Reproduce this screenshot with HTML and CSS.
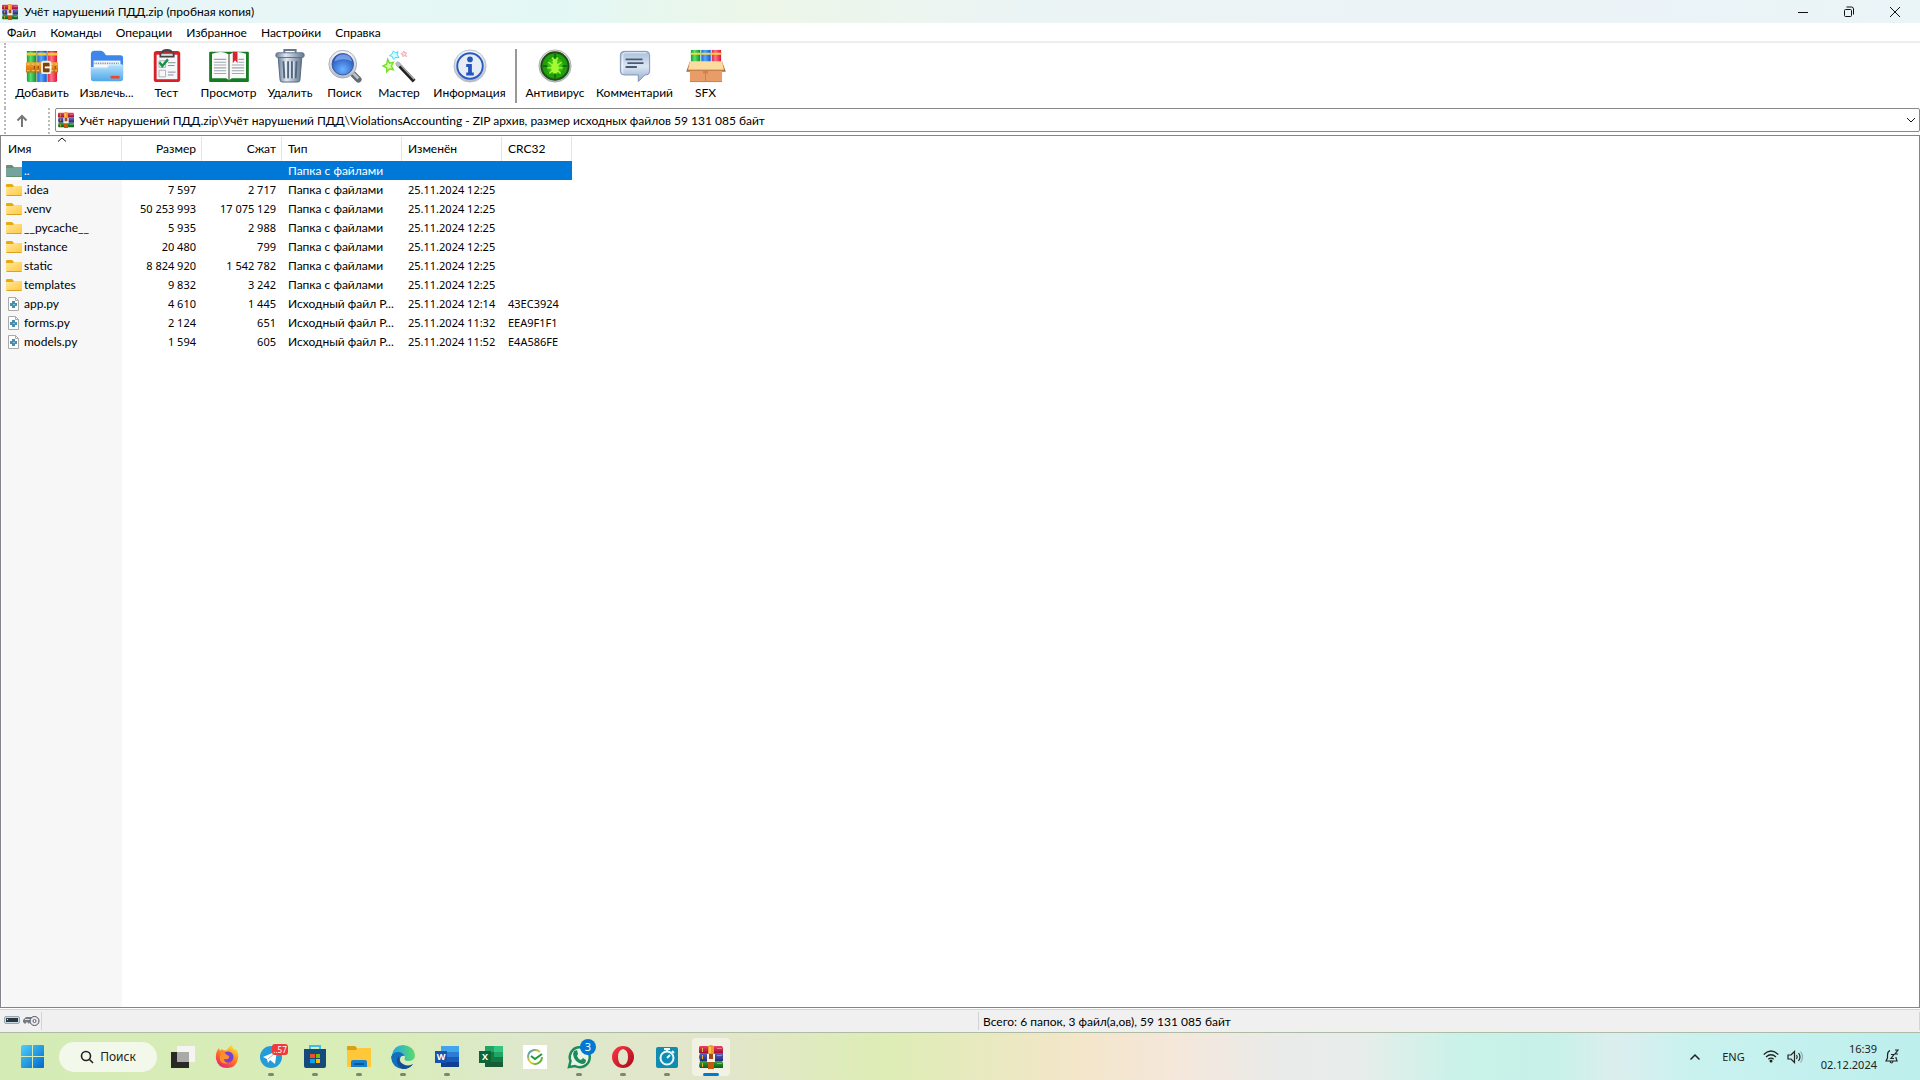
FILE: index.html
```html
<!DOCTYPE html>
<html lang="ru">
<head>
<meta charset="utf-8">
<title>Учёт нарушений ПДД.zip (пробная копия)</title>
<link rel="stylesheet" href="styles.css">
</head>
<body>
<svg class="defs" aria-hidden="true">
  <defs>
    <linearGradient id="g-red" x2="0" y2="1"><stop offset="0" stop-color="#f0416a"/><stop offset="1" stop-color="#9e1030"/></linearGradient>
    <linearGradient id="g-blue" x2="0" y2="1"><stop offset="0" stop-color="#5a62c8"/><stop offset="1" stop-color="#252a78"/></linearGradient>
    <linearGradient id="g-green" x2="0" y2="1"><stop offset="0" stop-color="#38a838"/><stop offset="1" stop-color="#0c5a1c"/></linearGradient>
    <linearGradient id="g-bgreen"><stop offset="0" stop-color="#15a030"/><stop offset=".4" stop-color="#58e070"/><stop offset="1" stop-color="#128a2c"/></linearGradient>
    <linearGradient id="g-bblue"><stop offset="0" stop-color="#1768d8"/><stop offset=".4" stop-color="#58a8ff"/><stop offset="1" stop-color="#1258c8"/></linearGradient>
    <linearGradient id="g-bred"><stop offset="0" stop-color="#e02848"/><stop offset=".4" stop-color="#ff7088"/><stop offset="1" stop-color="#d81838"/></linearGradient>
    <linearGradient id="g-belt" x2="0" y2="1"><stop offset="0" stop-color="#f8a830"/><stop offset="1" stop-color="#c86808"/></linearGradient>
    <linearGradient id="g-folder" x2="1" y2="1"><stop offset="0" stop-color="#ffe8a0"/><stop offset="1" stop-color="#ffc93c"/></linearGradient>
    <linearGradient id="g-bfold" x2="0" y2="1"><stop offset="0" stop-color="#b8e4fc"/><stop offset="1" stop-color="#4fa8ea"/></linearGradient>
    <linearGradient id="g-steel"><stop offset="0" stop-color="#6c7f98"/><stop offset=".35" stop-color="#dfe8f1"/><stop offset="1" stop-color="#62768f"/></linearGradient>
    <linearGradient id="g-silver" x2="0" y2="1"><stop offset="0" stop-color="#f6f8fa"/><stop offset="1" stop-color="#b4bcc6"/></linearGradient>
    <radialGradient id="g-lens" cx=".5" cy=".75" r=".75"><stop offset="0" stop-color="#6ab4ff"/><stop offset="1" stop-color="#1c46b4"/></radialGradient>
    <radialGradient id="g-virus"><stop offset="0" stop-color="#5fe81c"/><stop offset="1" stop-color="#128f08"/></radialGradient>
    <linearGradient id="g-bubble" x2="0" y2="1"><stop offset="0" stop-color="#a8bedb"/><stop offset=".5" stop-color="#dbe6f3"/><stop offset="1" stop-color="#91abcc"/></linearGradient>
    <linearGradient id="g-win" x2="1" y2="1"><stop offset="0" stop-color="#4fd0fa"/><stop offset="1" stop-color="#0068cc"/></linearGradient>
    <linearGradient id="g-fox" x1=".8" x2=".2" y2="1"><stop offset="0" stop-color="#ffe53c"/><stop offset=".5" stop-color="#ff7a20"/><stop offset="1" stop-color="#e8187c"/></linearGradient>
    <linearGradient id="g-edge" x2="1" y2="0"><stop offset="0" stop-color="#22a4e8"/><stop offset="1" stop-color="#5bdc68"/></linearGradient>
    <linearGradient id="g-opera" x2="1" y2="1"><stop offset="0" stop-color="#ff3848"/><stop offset="1" stop-color="#a80818"/></linearGradient>
    <linearGradient id="g-sber" x2="1" y2="1"><stop offset="0" stop-color="#2a90e8"/><stop offset=".5" stop-color="#f0d018"/><stop offset="1" stop-color="#18a038"/></linearGradient>
  </defs>
  <symbol id="winrar" viewBox="0 0 24 24">
    <path fill="url(#g-red)" d="M1 1h22l1 2v5H0V2z"/><path fill="url(#g-blue)" d="M1 8h23v8H1L0 12z"/><path fill="url(#g-green)" d="M1 16h22l1 2v5H1l-1-2z"/>
    <path fill="#e0b030" d="M3 3h1v4H3zM3 10h1v4H3zM3 18h1v4H3z"/><path fill="#fff" opacity=".35" d="M18 3h5v1h-5zM18 10h5v1h-5zM18 18h5v1h-5z"/>
    <path fill="#c85810" d="M9 16h6v8H9z"/><path fill="#f09830" d="M9 1l3-1 3 1v8H9z"/><path fill="#ffc850" d="M10 2h2v6h-2z"/>
    <path fill="#a04c10" d="M10 9h4v7h-4z"/><path fill="#f8f2ea" d="M8 9h2v5h4V9h2v8H8z"/>
  </symbol>
  <symbol id="folder" viewBox="0 0 16 14">
    <path fill="#eda90c" d="M0 2a1 1 0 0 1 1-1h5l2 2h7a1 1 0 0 1 1 1v9H0z"/><path fill="url(#g-folder)" d="M0 4h7l1-1h8v9a1 1 0 0 1-1 1H1a1 1 0 0 1-1-1z"/><path fill="#dda026" d="M1 12h14v1H1z"/>
  </symbol>
  <symbol id="folder-up" viewBox="0 0 16 14">
    <path fill="#68906f" d="M0 2a1 1 0 0 1 1-1h5l2 2h7a1 1 0 0 1 1 1v9H0z"/><path fill="#75a49f" d="M0 4h7l1-1h8v9a1 1 0 0 1-1 1H1a1 1 0 0 1-1-1z"/><path fill="#62906e" d="M1 12h14v1H1z"/>
  </symbol>
  <symbol id="py" viewBox="0 0 16 14">
    <path fill="#fff" stroke="#aaa" d="M2.500.500h7l3 3v10h-10z"/><path fill="none" stroke="#aaa" d="M9.500.500v3h3"/>
    <path fill="#4a8fae" d="M6 4h3v2h2v3H9v2H6V9H4V6h2z"/><path fill="#8fc2d6" d="M7 7h2v1H7z"/>
  </symbol>
</svg>

<header class="titlebar">
  <svg class="app-icon"><use href="#winrar"/></svg>
  <h1 class="title">Учёт нарушений ПДД.zip (пробная копия)</h1>
  <div class="window-buttons">
    <button aria-label="Свернуть"><svg width="12" height="12"><path d="M1 6.500h10"/></svg></button>
    <button aria-label="Восстановить"><svg width="12" height="12"><path d="M3.500 1h5q2 0 2 2v5.500"/><rect x="1.500" y="3.500" width="7" height="7" rx="1"/></svg></button>
    <button aria-label="Закрыть"><svg width="12" height="12"><path d="M1 1l10 10M11 1L1 11"/></svg></button>
  </div>
</header>

<nav class="menu">
  <button>Файл</button><button>Команды</button><button>Операции</button><button>Избранное</button><button>Настройки</button><button>Справка</button>
</nav>

<div class="toolbar">
  <button class="tool"><svg viewBox="0 0 36 36">
    <path fill="url(#g-bgreen)" d="M2 2h10v33H3l-1-1z"/><path fill="url(#g-bblue)" d="M13 2h10v33H13z"/><path fill="url(#g-bred)" d="M24 2h10v32l-1 1h-9z"/>
    <path fill="#f6c82c" d="M2 4h10v3H2zM13 4h10v3H13zM24 4h10v3H24z"/><path fill="#222" opacity=".3" d="M2 2h32v1H2zM12 2h1v33h-1zM23 2h1v33h-1z"/>
    <rect y="14" x="1" width="34" height="11" rx="1" fill="url(#g-belt)"/><path fill="none" stroke="#ffd070" d="M2 16h32M2 23h32" stroke-dasharray="3 2"/>
    <path fill="none" stroke="#843c08" d="M14 18v3M10 18v3M32 18v3"/><rect x="18" y="13.500" width="9" height="12" rx="2" fill="#7c400c" stroke="#f8ece0" stroke-width="2"/><path stroke="#fff" stroke-width="2" d="M21 19.500h7"/></svg>Добавить</button>
  <button class="tool"><svg viewBox="0 0 38 36"><path fill="#3f86ea" d="M1 5q0-4 4-4h7q3 0 5 4l1 1h16q3 0 3 3v20H1z"/><path fill="#f7fafc" d="M4 12h30v8H4z"/><path stroke="#7b8794" stroke-width="2" stroke-dasharray="1 1" d="M5 15h28"/><path fill="url(#g-bfold)" d="M1 19h18l3-3h13q2 0 2 2v14q0 3-3 3H4q-3 0-3-3z"/><path fill="none" stroke="#d9f2ff" d="M2 20h17l3-3h13"/><path fill="#f04824" d="M23 29h10v3H23z"/></svg>Извлечь...</button>
  <button class="tool"><svg viewBox="0 0 30 36"><rect x="1" y="2" width="28" height="33" rx="3" fill="#d82028"/><path fill="#f5f6f8" d="M4 6h22v26H4z"/><path fill="none" stroke="#444" stroke-width="2" d="M8 5h14v3H8zM10 4q0-3 5-3t5 3"/><path fill="#d7dce3" d="M9 5h12v2H9z"/><path fill="none" stroke="#aab0b8" d="M6.500 12.500h7v7h-7zM6.500 22.500h7v7h-7z"/><path stroke="#858c95" d="M16 14.500h8M16 17.500h7M16 24.500h8M16 27.500h6"/><path fill="none" stroke="#159544" stroke-width="2.500" d="M7 14l3 4 6-7"/></svg>Тест</button>
  <button class="tool"><svg class="book" viewBox="0 0 44 36"><rect x="1" y="3" width="42" height="32" rx="1" fill="#167c22"/><path fill="#fafafa" d="M4 5q12-4 18 1 6-5 18-1v26H25l-3 2-3-2H4z"/><path stroke="#a0a6ae" stroke-width="1.200" d="M6 11h13M6 14h13M6 17h13M6 20h13M6 23h13M6 26h13M25 17h13M25 20h13M25 23h13M25 26h13M32 11h6M32 14h6"/><path stroke="#6b7c6b" stroke-width="1.500" d="M22 6v27"/><path fill="#d82430" d="M26 3h5v12l-2.500-3-2.500 3z"/></svg>Просмотр</button>
  <button class="tool"><svg viewBox="0 0 32 36"><path fill="none" stroke="#66788f" stroke-width="2" d="M10 4V1h12v3"/><path fill="url(#g-steel)" stroke="#536779" d="M3.500 9h25l-2 24q0 2-3 2h-15q-3 0-3-2z"/><rect x="1" y="4" width="30" height="5" rx="2" fill="url(#g-steel)" stroke="#5f7085"/><path stroke="#52667e" stroke-width="2" d="M9 13l1 18M14 13v18M18 13v18M23 13l-1 18"/><path stroke="#edf4fb" d="M11 13l1 18M16 13v18M20 13v18"/></svg>Удалить</button>
  <button class="tool"><svg viewBox="0 0 38 36"><path stroke="#646b74" stroke-width="7" stroke-linecap="round" d="M28 27l6 6"/><path stroke="#bcc2c9" stroke-width="3" d="M27 25l7 7"/><circle cx="16.500" cy="16" r="15.500" fill="url(#g-silver)" stroke="#a4abb4"/><circle cx="16.500" cy="16" r="12" fill="url(#g-lens)" stroke="#3a549c"/><path fill="#a4c8fa" opacity=".6" d="M7 13q2-8 10-8t10 8q-10-5-20 0"/></svg>Поиск</button>
  <button class="tool"><svg viewBox="0 0 36 36"><path stroke="#222" stroke-width="4" d="M16 15l18 19"/><path stroke="#a9adb1" stroke-width="1.500" d="M17 14l17 18"/><path stroke="#b8bcc2" stroke-width="4" d="M15 14l4 4"/><path fill="#d8ffa0" stroke="#70e020" stroke-width="1.500" d="M6 11l2 4 4-1-2 4 2 4-4-1-3 3v-4l-4-2 4-2z"/><path fill="#d8fbff" stroke="#42d4f4" d="M12 2l2 2 3-1-1 3 2 3h-4l-2 2-1-3-3-1 3-2z"/><path fill="#ffe0e0" stroke="#f49498" stroke-width=".800" d="M23 2l1 2h2l-1 2 1 2-2-1-2 1v-2l-2-1 2-1z"/></svg>Мастер</button>
  <button class="tool"><svg viewBox="0 0 36 36"><circle cx="18" cy="18" r="17" fill="url(#g-silver)" stroke="#b5bcc8"/><circle cx="18" cy="18" r="13.500" fill="#e8edf5" stroke="#2a5bc4" stroke-width="2"/><circle cx="18" cy="11" r="3" fill="#2457bd"/><path fill="#2457bd" d="M14 16h6v9h2v3h-8v-3h2v-6h-2z"/></svg>Информация</button>
  <span class="tool-separator"></span>
  <button class="tool"><svg viewBox="0 0 36 36"><circle cx="18" cy="18" r="17" fill="url(#g-silver)" stroke="#a5aaa5"/><circle cx="18" cy="18" r="14.500" fill="url(#g-virus)" stroke="#224a18" stroke-width="2"/><circle cx="18" cy="18" r="10" fill="none" stroke="#159010"/><path stroke="#145c10" stroke-width="1.500" d="M18 5v5M18 26v5M5 18h5M26 18h5"/><ellipse cx="18" cy="20" rx="4" ry="6" fill="#a6fa35"/><circle cx="18" cy="13" r="2.500" fill="#a6fa35"/><path stroke="#a6fa35" stroke-width="1.500" fill="none" d="M11 14l4 3M10 20h16M12 26l3-3M25 14l-4 3M24 26l-3-3M15 9l2 3M21 9l-2 3"/></svg>Антивирус</button>
  <button class="tool"><svg viewBox="0 0 36 36"><path fill="url(#g-bubble)" stroke="#7b93b4" d="M6.500 2.500h23q4 0 4 4v17q0 4-4 4h-1l-7 7v-7h-15q-4 0-4-4v-17q0-4 4-4z"/><path fill="none" stroke="#edf4fc" d="M5 26V7q0-3 3-3h22"/><path stroke="#4a5a72" stroke-width="2" d="M8 11h18M10 15h17M8 19h12"/></svg>Комментарий</button>
  <button class="tool"><svg class="box" viewBox="0 0 42 36"><path fill="url(#g-bgreen)" d="M5 1h10v14H5z"/><path fill="url(#g-bblue)" d="M16 1h10v14H16z"/><path fill="url(#g-bred)" d="M27 1h10v14H27z"/><path fill="#f6d83c" d="M5 4h10v2H5zM16 4h10v2H16zM27 4h10v2H27z"/><path fill="#b36c3b" d="M4 13L0 24h6zM38 13l4 11h-6z"/><path fill="#e89c68" d="M4 20h34v14H4z"/><path fill="#fbdc9e" d="M4 13h34l2 9H2z"/><path fill="#c98158" d="M18 23h5v3h-5zM20 26h1v8h-1z"/><path stroke="#bb7646" d="M4 22.500h34M4 34.500h34"/></svg>SFX</button>
</div>

<div class="address-row">
  <button class="up" aria-label="Вверх"><svg width="12" height="14"><path d="M6 13V2M1.500 6.500L6 2l4.500 4.500"/></svg></button>
  <div class="address">
    <svg class="app-icon"><use href="#winrar"/></svg>
    <input aria-label="Путь" value="Учёт нарушений ПДД.zip\Учёт нарушений ПДД\ViolationsAccounting - ZIP архив, размер исходных файлов 59 131 085 байт">
    <button aria-label="Раскрыть список"><svg width="10" height="6"><path d="M1 1l4 4 4-4"/></svg></button>
  </div>
</div>

<main class="list">
  <table class="files">
    <colgroup><col class="c-name"><col class="c-num"><col class="c-num"><col class="c-type"><col class="c-date"><col class="c-crc"></colgroup>
    <thead><tr><th class="sorted">Имя<svg width="10" height="5"><path d="M1 4.500L5 1l4 3.500"/></svg></th><th class="num">Размер</th><th class="num">Сжат</th><th>Тип</th><th>Изменён</th><th>CRC32</th></tr></thead>
    <tbody>
      <tr class="selected"><td><span class="name"><svg><use href="#folder-up"/></svg><span>..</span></span></td><td></td><td></td><td>Папка с файлами</td><td></td><td></td></tr>
      <tr><td><span class="name"><svg><use href="#folder"/></svg><span>.idea</span></span></td><td class="num">7 597</td><td class="num">2 717</td><td>Папка с файлами</td><td class="date">25.11.2024 12:25</td><td></td></tr>
      <tr><td><span class="name"><svg><use href="#folder"/></svg><span>.venv</span></span></td><td class="num">50 253 993</td><td class="num">17 075 129</td><td>Папка с файлами</td><td class="date">25.11.2024 12:25</td><td></td></tr>
      <tr><td><span class="name"><svg><use href="#folder"/></svg><span>__pycache__</span></span></td><td class="num">5 935</td><td class="num">2 988</td><td>Папка с файлами</td><td class="date">25.11.2024 12:25</td><td></td></tr>
      <tr><td><span class="name"><svg><use href="#folder"/></svg><span>instance</span></span></td><td class="num">20 480</td><td class="num">799</td><td>Папка с файлами</td><td class="date">25.11.2024 12:25</td><td></td></tr>
      <tr><td><span class="name"><svg><use href="#folder"/></svg><span>static</span></span></td><td class="num">8 824 920</td><td class="num">1 542 782</td><td>Папка с файлами</td><td class="date">25.11.2024 12:25</td><td></td></tr>
      <tr><td><span class="name"><svg><use href="#folder"/></svg><span>templates</span></span></td><td class="num">9 832</td><td class="num">3 242</td><td>Папка с файлами</td><td class="date">25.11.2024 12:25</td><td></td></tr>
      <tr><td><span class="name"><svg><use href="#py"/></svg><span>app.py</span></span></td><td class="num">4 610</td><td class="num">1 445</td><td>Исходный файл P...</td><td class="date">25.11.2024 12:14</td><td class="date">43EC3924</td></tr>
      <tr><td><span class="name"><svg><use href="#py"/></svg><span>forms.py</span></span></td><td class="num">2 124</td><td class="num">651</td><td>Исходный файл P...</td><td class="date">25.11.2024 11:32</td><td class="date">EEA9F1F1</td></tr>
      <tr><td><span class="name"><svg><use href="#py"/></svg><span>models.py</span></span></td><td class="num">1 594</td><td class="num">605</td><td>Исходный файл P...</td><td class="date">25.11.2024 11:52</td><td class="date">E4A586FE</td></tr>
    </tbody>
  </table>
</main>

<footer class="status">
  <div class="status-icons">
    <svg width="16" height="10"><rect x=".500" y="1.500" width="15" height="7" rx="1.500" fill="#c5dbe6" stroke="#8fa9b8"/><path fill="#30363e" d="M2 3h12v4H2z"/><path fill="#e4ebef" d="M3 4h1v1H3z"/></svg>
    <svg width="17" height="12"><path fill="#757b83" d="M0 5l3-3h7v5H7L6 9 4 7 2 9 0 7z"/><path stroke="#dfe3e8" d="M2 4.500h7"/><circle cx="11.500" cy="6" r="4.500" fill="#e8eaee" stroke="#4d525a"/><circle cx="11.500" cy="6" r="1.500" fill="#fff" stroke="#555b63"/></svg>
  </div>
  <div class="status-left"></div>
  <div class="status-right">Всего: 6 папок, 3 файл(а,ов), 59 131 085 байт</div>
</footer>

<div class="taskbar">
  <button class="start" aria-label="Пуск"><svg width="24" height="24"><path fill="url(#g-win)" d="M2 0h9v11H0V2q0-2 2-2zM12 0h10q1 0 1 1v10H12zM0 12h11v11H1q-1 0-1-1zM12 12h11v10q0 1-1 1H12z"/></svg></button>
  <button class="search"><svg width="14" height="14"><circle cx="6" cy="6" r="4.500"/><path d="M9.500 9.500L13 13"/></svg>Поиск</button>
  <div class="apps">
    <button aria-label="Представление задач"><svg viewBox="0 0 24 24"><path fill="#f4f4f2" d="M6 1h18v16H6z"/><path fill="#292927" d="M0 7h18v16H0z"/><path fill="#aaaaa8" d="M6 7h12v10H6z"/></svg></button>
    <button aria-label="Firefox"><svg viewBox="0 0 24 24"><path fill="url(#g-fox)" d="M12 5q2-4 5-5 0 3 3 5l1-1q3 4 2 10-2 9-11 9T1 14Q0 8 4 3l1 3 2-2q1 2 5 1z"/><circle cx="13" cy="12" r="5.500" fill="#7440d8"/><path fill="#ff9028" d="M4 8q5-2 8 2 3 1 2 3-2 2-5 1 0 3 4 4-6 2-8-3-1-4 1-7z"/></svg></button>
    <button class="running" aria-label="Telegram"><svg viewBox="0 0 24 24"><circle cx="12" cy="12" r="11" fill="#259cd5"/><path fill="#fff" d="M4 12l14-6-2 13-5-4-2 3-1-4z"/><path stroke="#97b9cd" d="M9 14l7-6"/></svg><span class="badge red">..57</span></button>
    <button class="running" aria-label="Microsoft Store"><svg viewBox="0 0 24 24"><path fill="none" stroke="#36c1f1" stroke-width="2" d="M7 5V1h10v4"/><path fill="#174a7c" d="M1 4h22v17q0 2-2 2H3q-2 0-2-2z"/><path fill="#f25022" d="M7 9h5v4H7z"/><path fill="#7fba00" d="M13 9h4v4h-4z"/><path fill="#00a4ef" d="M7 14h5v4H7z"/><path fill="#ffb900" d="M13 14h4v4h-4z"/></svg></button>
    <button class="running" aria-label="Проводник"><svg viewBox="0 0 24 24"><path fill="#dc9e12" d="M0 2q0-1 1-1h7l2 2v4H0z"/><path fill="#ffc83b" d="M0 5h9l2-2h13v18q0 1-1 1H1q-1 0-1-1z"/><path fill="#1680ce" d="M4 22v-5q0-2 2-2h12q2 0 2 2v5z"/><path fill="#0a579e" d="M7 18h10v2H7z"/></svg></button>
    <button class="running" aria-label="Microsoft Edge"><svg viewBox="0 0 24 24"><path fill="url(#g-edge)" d="M1 10Q3 0 12 0q11 1 12 10 0 6-7 6-5 0-3-4-1-5-6-4-4 0-7 4z"/><path fill="#1270bd" d="M0 12q2-5 7-5 5 0 7 4-5-1-5 4 0 5 7 6 3 0 6-2-4 5-10 5Q1 23 0 12z"/><path fill="#174d91" d="M8 11q-4 4-1 9 2 3 5 4 7 0 10-5-5 3-10 0-5-3-4-8z"/></svg></button>
    <button class="running" aria-label="Word"><svg viewBox="0 0 24 24"><path fill="#41a5ee" d="M6 1h18v6H6z"/><path fill="#2b7cd3" d="M6 7h18v5H6z"/><path fill="#185abd" d="M6 12h18v5H6z"/><path fill="#103f91" d="M6 17h18v5H6z"/><path fill="#1652ae" d="M0 6h12v12H0z"/><text x="6" y="15" class="office">W</text></svg></button>
    <button aria-label="Excel"><svg viewBox="0 0 24 24"><path fill="#21a366" d="M6 1h9v6H6z"/><path fill="#33c481" d="M15 1h9v6h-9z"/><path fill="#107c41" d="M6 7h9v10H6zM15 12h9v5h-9z"/><path fill="#21a366" d="M15 7h9v5h-9z"/><path fill="#185c37" d="M6 17h18v5H6z"/><path fill="#0c6534" d="M0 6h12v12H0z"/><text x="6" y="15" class="office">X</text></svg></button>
    <button aria-label="Сбер"><svg viewBox="0 0 24 24"><path fill="#fff" d="M0 0h24v24H0z"/><path fill="none" stroke="url(#g-sber)" stroke-width="2" d="M17 7a7 7 0 1 0 2 5"/><path fill="none" stroke="#199a38" stroke-width="2" d="M8 11l4 3 7-5"/></svg></button>
    <button class="running" aria-label="WhatsApp"><svg viewBox="0 0 24 24"><path fill="#e9f4e4" stroke="#1d8b5c" stroke-width="2.500" d="M2 22l1.500-6A10 10 0 1 1 8 21z"/><path fill="#1d8b5c" d="M7 6l3-1 1 4-1 2q1 3 4 4l2-2 3 2q0 4-4 4-8-2-9-10z"/></svg><span class="badge blue">3</span></button>
    <button class="running" aria-label="Opera"><svg viewBox="0 0 24 24"><path fill="url(#g-opera)" fill-rule="evenodd" d="M12 1a11 11 0 1 0 0 22 11 11 0 1 0 0-22zm0 3q5 1 5 8t-5 8q-5-1-5-8t5-8z"/></svg></button>
    <button class="running" aria-label="Таймер"><svg viewBox="0 0 24 24"><rect x="1" y="2" width="22" height="21" rx="2" fill="#118cb1"/><circle cx="12" cy="13" r="6.500" fill="none" stroke="#e9f8fc" stroke-width="2"/><path stroke="#e9f8fc" stroke-width="2" d="M9 4h6M12 4v3M17 6l2 2M12 13l3-3"/></svg></button>
    <button class="running active" aria-label="WinRAR"><svg><use href="#winrar"/></svg></button>
  </div>
  <div class="tray">
    <button class="chevron" aria-label="Скрытые значки"><svg width="12" height="8"><path d="M1.500 6.500L6 2l4.500 4.500" stroke-width="1.500"/></svg></button>
    <button class="lang">ENG</button>
    <button class="net" aria-label="Сеть и звук">
      <svg width="16" height="13"><path d="M.700 4.500Q8-2.500 15.300 4.500M3 7q5-4.500 10 0M5.300 9.300q2.700-2.300 5.400 0"/><circle cx="8" cy="11" r="1.500" fill="#222" stroke="none"/></svg>
      <svg width="16" height="14"><path d="M1 5h3l3.500-3.500v11L4 9H1zM9.500 5q1.500 2 0 4M11.500 3q3 4 0 8"/><path opacity=".3" d="M13.500 1.500q4 5.500 0 11"/></svg>
    </button>
    <button class="clock"><time>16:39</time><time>02.12.2024</time></button>
    <button class="bell" aria-label="Уведомления"><svg width="14" height="15"><path d="M5 1.500Q2.500 2.500 2.500 6v3l-1.500 3h11l-1-3V8M5 12.500q1.500 3 3 0M6 5.500h3l-3 4h3M10 1h3l-3 4h3"/></svg></button>
  </div>
</div>
</body>
</html>
```
FILE: styles.css
```css
* { box-sizing: border-box; }
body {
  margin: 0;
  min-height: 100vh;
  display: flex;
  flex-direction: column;
  background: #fff;
  color: #000;
  font: 12px/19px Lato, "Noto Sans", sans-serif;
}
button, input {
  margin: 0;
  padding: 0;
  border: 0;
  background: none;
  color: inherit;
  font: inherit;
}
svg { display: block; flex: none; }
.defs { position: absolute; width: 0; height: 0; }
.app-icon { width: 16px; height: 16px; }

.titlebar {
  display: flex;
  align-items: center;
  height: 23px;
  padding: 0 2px;
  gap: 6px;
  background: linear-gradient(90deg, #e4f4f7, #e8f6f6 14%, #e3f8f5 29%, #edf6e8 40%, #ebf4f5 54%, #ebf3f7 83%, #eaf5f8);
}
.title { flex: 1; margin: 0; font-size: 12px; font-weight: 400; }
.window-buttons { display: flex; }
.window-buttons button { width: 46px; height: 20px; display: grid; place-items: center; }
.window-buttons svg, .address button svg, .up svg, .sorted svg { fill: none; stroke: #111; }

.menu {
  display: flex;
  gap: 14px;
  height: 20px;
  padding-left: 7px;
  border-bottom: 2px solid #eee;
}

.toolbar {
  display: grid;
  grid-template-columns: 60px 69px 51px 73px 50px 59px 50px 91px 2px 76px 83px 59px;
  height: 65px;
  margin-left: 4px;
  padding: 6px 0 0 6px;
  border-left: 2px dotted #bbb;
}
.tool {
  display: flex;
  flex-direction: column;
  align-items: center;
  white-space: nowrap;
}
.tool svg { width: 34px; height: 34px; }
.tool .book, .tool .box { width: 42px; }
.tool-separator { height: 54px; background: #999; }

.address-row {
  display: flex;
  height: 26px;
  margin-left: 4px;
  border-left: 2px dotted #bbb;
}
.up { width: 44px; padding-left: 10px; border-right: 2px dotted #bbb; }
.up svg { stroke: #777; stroke-width: 2; }
.address {
  flex: 1;
  display: flex;
  align-items: center;
  gap: 5px;
  height: 24px;
  margin-left: 5px;
  padding: 0 3px 0 2px;
  border: 1px solid #888;
  border-radius: 2px;
}
.address input { flex: 1; min-width: 0; outline: 0; }

.list {
  flex: 1;
  border: 1px solid #83838a;
  margin-top: 1px;
  padding-top: 1px;
  background: linear-gradient(90deg, #fff 1px, #f7f7f7 1px, #f7f7f7 121px, #fff 121px);
}
.files { width: 571px; table-layout: fixed; border-collapse: separate; border-spacing: 0; }
.c-name { width: 121px; }
.c-num { width: 80px; }
.c-type { width: 120px; }
.c-date { width: 100px; }
.c-crc { width: 70px; }
.files th {
  height: 24px;
  padding: 0 5px 1px 6px;
  background: #fff;
  border-right: 1px solid #e4e4e4;
  font-weight: 400;
  text-align: left;
}
.files .sorted { position: relative; padding-left: 7px; }
.sorted svg { position: absolute; top: 0; right: 54px; }
.files td { height: 19px; padding: 0 0 0 6px; line-height: 19px; white-space: nowrap; }
.files .num { text-align: right; padding-right: 6px; }
.files th.num { padding-right: 5px; }
td.num, td.date { font-size: 11px; font-family: "Noto Sans", sans-serif; }
.files td:first-child { padding: 0; }
.name { display: flex; align-items: center; padding-left: 5px; }
.name svg { width: 16px; height: 14px; }
.name span { flex: 1; padding-left: 2px; }
.selected td { background: #0078d7; color: #fff; }
.selected td:first-child { background: #fff; }
.selected .name span { background: #0078d7; }

.status {
  display: flex;
  height: 23px;
  margin-top: 1px;
  padding: 2px 0;
  background: #f0f0f0;
  border-top: 1px solid #d4d5d8;
}
.status-icons { display: flex; gap: 3px; width: 42px; padding: 3px 0 0 4px; border-right: 1px solid #d4d4d4; }
.status-left { flex: 1; }
.status-right { flex: 1; border: 1px solid #d4d4d4; border-width: 0 1px; padding-left: 4px; }

.taskbar {
  display: flex;
  align-items: center;
  height: 48px;
  padding: 0 21px;
  border-top: 1px solid #aebba5;
  background: linear-gradient(90deg, #d5ebb6, #d9edb7 20%, #dee8cc 27%, #e2e6ca 38%, #ddedb5 46%, #f3e6c9 56%, #f5e7da 61%, #e9ebea 67%, #e7edea 71%, #c9f2e8 76%, #c7f1e9 81%, #dceeee 84%, #c9f2ef 88%, #bdefed);
  color: #222;
}
.taskbar button { flex: none; }
.search {
  display: flex;
  align-items: center;
  justify-content: center;
  gap: 6px;
  width: 98px;
  height: 30px;
  margin: 0 4px 0 14px;
  border-radius: 15px;
  background: #f2f8ea;
  font-family: "Noto Sans", sans-serif;
}
.search svg, .tray svg { fill: none; stroke: #222; stroke-width: 1.2; }
.search svg { stroke-width: 1.6; }
.apps { display: flex; flex: 1; gap: 6px; padding-left: 3px; }
.apps button {
  position: relative;
  width: 38px;
  height: 38px;
  display: grid;
  place-items: center;
  border-radius: 4px;
}
.apps svg { width: 24px; height: 24px; }
.office { fill: #fff; font: 700 9px "Open Sans", sans-serif; text-anchor: middle; }
.running::after {
  content: "";
  position: absolute;
  left: 16px;
  bottom: 0;
  width: 6px;
  height: 3px;
  border-radius: 2px;
  background: #7c8672;
}
.apps .active { background: #f1f1e4; }
.active::after { left: 11px; width: 16px; background: #0078d4; }
.badge { position: absolute; left: 20px; width: 16px; color: #fff; text-align: center; font-family: "Noto Sans", sans-serif; }
.red { top: 6px; border-radius: 3px; background: #f03a3a; font-size: 8px; line-height: 11px; }
.blue { top: 1px; border-radius: 8px; background: #0078d4; font-size: 11px; line-height: 16px; }

.tray { display: flex; align-items: center; font: 11px/16px "Noto Sans", sans-serif; }
.chevron { width: 12px; margin-right: 20px; }
.lang { width: 25px; }
.net { display: flex; gap: 8px; margin: 0 16px 0 17px; }
.clock { width: 58px; display: flex; flex-direction: column; align-items: flex-end; }
.bell { margin-left: 8px; }
```
